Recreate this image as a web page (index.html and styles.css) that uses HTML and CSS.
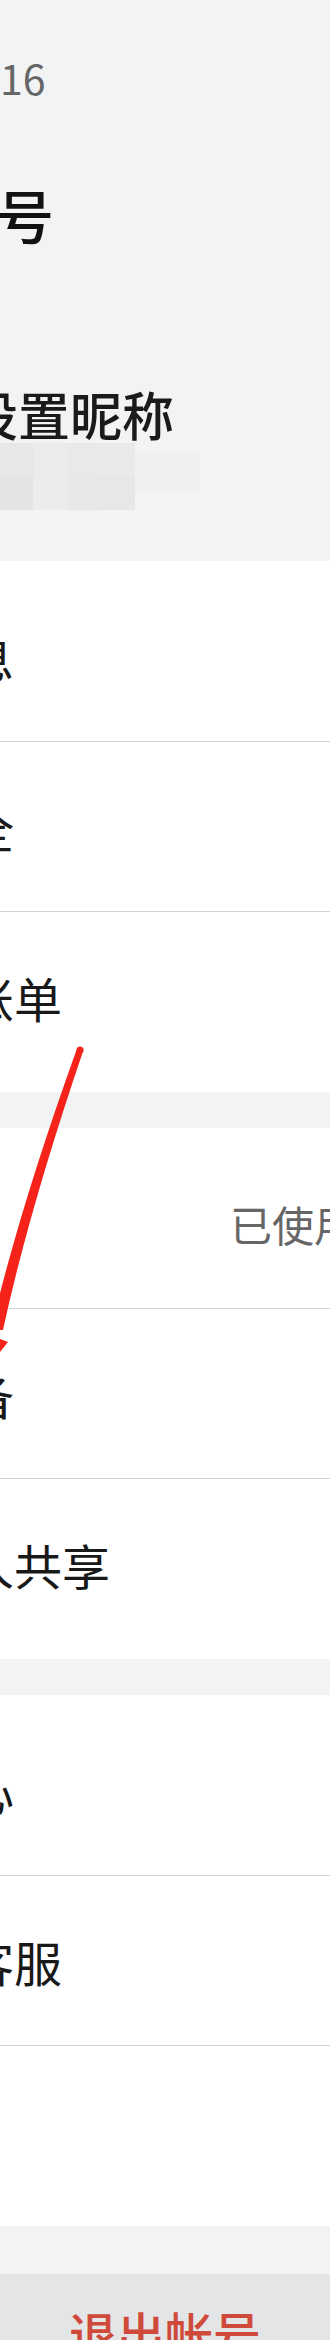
FILE: index.html
```html
<!DOCTYPE html>
<html lang="zh-CN">
<head>
<meta charset="utf-8">
<title>华为帐号</title>
<link rel="stylesheet" href="styles.css">
</head>
<body>
<div class="page">
  <header class="head">
    <div class="phone"><span class="prefix">186***</span><span class="tail">16</span></div>
    <h1 class="title">华为帐号</h1>
    <div class="profile">
      <div class="avatar"></div>
      <div class="info">
        <div class="nick">设置昵称</div>
        <div class="mosaic">
          <span class="tile t1"></span>
          <span class="tile t2"></span>
          <span class="tile t3"></span>
          <span class="tile t4"></span>
          <span class="tile t5"></span>
        </div>
      </div>
    </div>
  </header>

  <section class="group">
    <div class="row"><span class="label">个人信息</span></div>
    <div class="row"><span class="label">帐号安全</span></div>
    <div class="row"><span class="label">支付与账单</span></div>
  </section>

  <section class="group">
    <div class="row"><span class="label label-fixed">云空间</span><span class="value">已使用 18.6 GB/50 GB</span></div>
    <div class="row"><span class="label">我的设备</span></div>
    <div class="row"><span class="label">华为家人共享</span></div>
  </section>

  <section class="group last">
    <div class="row"><span class="label">隐私中心</span></div>
    <div class="row"><span class="label">帮助与客服</span></div>
    <div class="row"><span class="label"></span></div>
  </section>

  <div class="logout">退出帐号</div>
</div>

<svg class="arrow" width="330" height="2340" viewBox="0 0 330 2340" aria-hidden="true">
  <circle cx="80" cy="1050" r="3.5" fill="#f5231a"/>
  <path d="M76.5 1050 Q19 1210 -9 1330 L3 1330 Q29 1210 83.5 1050 Z" fill="#f5231a"/>
  <polygon points="0,1339 8,1342 0,1352" fill="#f5231a"/>
</svg>
</body>
</html>
```
FILE: styles.css
```css
html, body {
  margin: 0;
  padding: 0;
  overflow: hidden;
}
body {
  position: relative;
  width: 330px;
  height: 2340px;
  background: #f2f3f5;
  font-family: "Noto Sans CJK SC", "Noto Sans", sans-serif;
  color: #191919;
}
.page {
  width: 782px;
  margin-left: -226px;
}
.head {
  background: #f2f3f5;
  padding: 57px 48px 51px;
}
.phone {
  display: flex;
  font-size: 41px;
  line-height: 41px;
  color: #666666;
  white-space: nowrap;
}
.prefix {
  width: 178px;
  flex: none;
  overflow: hidden;
  text-align: right;
  padding-right: 30px;
  box-sizing: border-box;
}
.title {
  margin: 87px 0 0;
  font-size: 58px;
  line-height: 58px;
  font-weight: 500;
  color: #111111;
  white-space: nowrap;
}
.profile {
  display: flex;
  align-items: flex-start;
  gap: 24px;
  margin-top: 145px;
}
.avatar {
  width: 120px;
  height: 120px;
  border-radius: 50%;
  background: #dcdde0;
  flex: none;
}
.nick {
  font-size: 52px;
  line-height: 52px;
  font-weight: 500;
  color: #1a1a1a;
  white-space: nowrap;
}
.mosaic {
  display: flex;
  margin-top: 3px;
  height: 67px;
}
.tile {
  display: block;
  height: 100%;
}
.t1 { width: 67px; background: linear-gradient(#e6e7e9 0 48%, #e3e4e6 48%); }
.t2 { width: 35px; background: linear-gradient(#eaebed 0 48%, #ebecee 48%); }
.t3 { width: 32px; background: linear-gradient(#e8e9eb 0 48%, #e7e8ea 48%); }
.t4 { width: 35px; background: linear-gradient(#e9eaec 0 48%, #e6e7e9 48%); }
.t5 { width: 65px; height: 60%; margin-top: 8px; background: #eff0f2; }

.group {
  background: #ffffff;
  padding: 11px 0;
  margin-bottom: 36px;
}
.group.last {
  margin-bottom: 48px;
}
.row {
  display: flex;
  align-items: center;
  height: 169px;
  margin: 0 48px;
  border-bottom: 1px solid #d2d2d2;
  font-size: 48px;
  white-space: nowrap;
}
.row:last-child {
  border-bottom: none;
}
.label {
  color: #191919;
}
.label-fixed {
  width: 408px;
  flex: none;
}
.value {
  font-size: 42px;
  color: #666666;
}
.logout {
  background: #e4e5e7;
  height: 160px;
  padding-top: 34px;
  box-sizing: border-box;
  text-align: center;
  font-size: 48px;
  line-height: 48px;
  color: #cf4a3a;
  font-weight: 500;
}
.arrow {
  position: absolute;
  left: 0;
  top: 0;
  pointer-events: none;
}
```
